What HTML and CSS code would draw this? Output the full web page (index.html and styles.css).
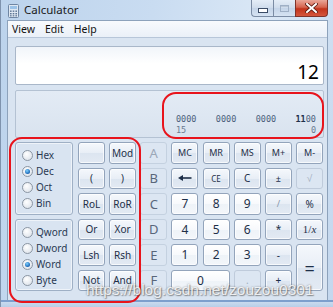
FILE: index.html
```html
<!DOCTYPE html>
<html>
<head>
<meta charset="utf-8">
<link rel="stylesheet" href="styles.css">
</head>
<body>
<div class="window">
  <div class="titlebar">
    <svg class="appicon" width="11" height="14" viewBox="0 0 11 14">
      <rect x="0.5" y="0.5" width="10" height="13" rx="1" fill="#dfe8f2" stroke="#6f86a3"/>
      <rect x="2" y="2" width="7" height="3" fill="#9cc3e8"/>
      <g fill="#5d7594">
        <rect x="2" y="6.5" width="1.6" height="1.4"/><rect x="4.7" y="6.5" width="1.6" height="1.4"/><rect x="7.4" y="6.5" width="1.6" height="1.4"/>
        <rect x="2" y="9" width="1.6" height="1.4"/><rect x="4.7" y="9" width="1.6" height="1.4"/><rect x="7.4" y="9" width="1.6" height="1.4"/>
        <rect x="2" y="11.2" width="1.6" height="1.2"/><rect x="4.7" y="11.2" width="1.6" height="1.2"/><rect x="7.4" y="11.2" width="1.6" height="1.2"/>
      </g>
    </svg>
    <span class="title">Calculator</span>
    <div class="controls">
      <div class="cbtn min"><span class="minbar"></span></div>
      <div class="cbtn max"><span class="maxbox"></span></div>
      <div class="cbtn close">
        <svg width="13" height="10" viewBox="0 0 13 10">
          <path d="M2 1 L11 9 M11 1 L2 9" stroke="#5a1a10" stroke-width="3.6" stroke-linecap="square"/>
          <path d="M2 1 L11 9 M11 1 L2 9" stroke="#ffffff" stroke-width="2" stroke-linecap="square"/>
        </svg>
      </div>
    </div>
  </div>
  <div class="client">
    <div class="menubar">
      <span class="menu">View</span>
      <span class="menu">Edit</span>
      <span class="menu">Help</span>
    </div>
    <div class="content">
      <div class="display">12</div>
      <div class="bits">
        <div class="bitsinner">
          <div class="bitrow">
            <span>0000</span><span>0000</span><span>0000</span><span><b>11</b>00</span>
          </div>
          <div class="bitrow small">
            <span>15</span><span>0</span>
          </div>
        </div>
      </div>
      <div class="keypad">
        <div class="radios">
          <div class="group">
            <div class="radio"><span class="dot"></span>Hex</div>
            <div class="radio"><span class="dot on"></span>Dec</div>
            <div class="radio"><span class="dot"></span>Oct</div>
            <div class="radio"><span class="dot"></span>Bin</div>
          </div>
          <div class="group">
            <div class="radio"><span class="dot"></span>Qword</div>
            <div class="radio"><span class="dot"></span>Dword</div>
            <div class="radio"><span class="dot on"></span>Word</div>
            <div class="radio"><span class="dot"></span>Byte</div>
          </div>
        </div>
        <div class="keys">
          <div class="btn"></div>
          <div class="btn">Mod</div>
          <div class="btn hex light">A</div>
          <div class="btn sm">MC</div>
          <div class="btn sm">MR</div>
          <div class="btn sm">MS</div>
          <div class="btn sm">M+</div>
          <div class="btn sm">M-</div>

          <div class="btn">(</div>
          <div class="btn">)</div>
          <div class="btn hex">B</div>
          <div class="btn"><svg width="14" height="6" viewBox="0 0 14 6"><path d="M4 3 H13.5" stroke="#1e2f48" stroke-width="1.6"/><path d="M0 3 L5 0 V6 Z" fill="#1e2f48"/></svg></div>
          <div class="btn xs">CE</div>
          <div class="btn">C</div>
          <div class="btn sm">±</div>
          <div class="btn dis">√</div>

          <div class="btn">RoL</div>
          <div class="btn">RoR</div>
          <div class="btn hex">C</div>
          <div class="btn num">7</div>
          <div class="btn num">8</div>
          <div class="btn num">9</div>
          <div class="btn thin">/</div>
          <div class="btn">%</div>

          <div class="btn">Or</div>
          <div class="btn">Xor</div>
          <div class="btn hex">D</div>
          <div class="btn num">4</div>
          <div class="btn num">5</div>
          <div class="btn num">6</div>
          <div class="btn">*</div>
          <div class="btn inv">1/<i>x</i></div>

          <div class="btn">Lsh</div>
          <div class="btn">Rsh</div>
          <div class="btn hex">E</div>
          <div class="btn num">1</div>
          <div class="btn num">2</div>
          <div class="btn num">3</div>
          <div class="btn">-</div>
          <div class="btn eq">=</div>

          <div class="btn">Not</div>
          <div class="btn">And</div>
          <div class="btn hex">F</div>
          <div class="btn num zero">0</div>
          <div class="btn dis">.</div>
          <div class="btn">+</div>
        </div>
      </div>
    </div>
  </div>
  <div class="bottomframe"></div>
</div>
<div class="mark mark-left"></div>
<div class="mark mark-right"></div>
<div class="watermark">https://blog.csdn.net/zouzou0301</div>
</body>
</html>
```
FILE: styles.css
```css
html, body {
  margin: 0;
  padding: 0;
}
body {
  width: 333px;
  height: 307px;
  overflow: hidden;
  position: relative;
  font-family: "Noto Sans", "Open Sans", sans-serif;
  background: linear-gradient(100deg, #bcd3ec 0%, #c9dcf1 40%, #dbe8f6 70%, #c3d7ee 100%);
}
.window {
  display: flex;
  flex-direction: column;
  height: 307px;
  border-left: 1px solid #7f93ad;
  box-sizing: border-box;
}
.titlebar {
  height: 20px;
  display: flex;
  align-items: flex-start;
  padding-left: 7px;
}
.appicon {
  margin-top: 4px;
}
.title {
  margin-left: 5px;
  margin-top: 3px;
  font-size: 11.5px;
  color: #1a1a1a;
  font-family: "Noto Sans", sans-serif;
  line-height: 14px;
}
.controls {
  margin-left: auto;
  margin-right: 5px;
  display: flex;
  height: 17px;
}
.cbtn {
  height: 16px;
  border: 1px solid #7b8ca4;
  border-top: none;
  display: flex;
  align-items: center;
  justify-content: center;
}
.min, .max {
  width: 21px;
  background: linear-gradient(#e4edf7, #cfdcec 50%, #c4d4e8 51%, #d6e3f2);
}
.min {
  border-radius: 0 0 0 4px;
  border-right: none;
}
.max {
  border-right: none;
}
.minbar {
  width: 8px;
  height: 3px;
  margin-top: 5px;
  background: #fff;
  border: 1px solid #3b4c66;
}
.maxbox {
  width: 7px;
  height: 5px;
  border: 1px solid #9fb0c6;
  box-shadow: inset 0 1px 0 #b9c6d6;
}
.close {
  width: 31px;
  border-radius: 0 0 4px 0;
  background: linear-gradient(#e9a799, #d6644f 45%, #c2331b 55%, #d4563c);
  border-color: #80332a;
}
.client {
  flex: 1;
  margin-left: 6px;
  margin-right: 5px;
  background: #d9e4f1;
  border: 1px solid #8da2bb;
  border-bottom: none;
  display: flex;
  flex-direction: column;
}
.menubar {
  height: 16px;
  display: flex;
  align-items: center;
  gap: 0;
  padding-left: 4px;
  background: linear-gradient(#f8fafd, #eaf0f8);
  border-bottom: 1px solid #b7c6d9;
}
.menu {
  font-size: 10.5px;
  color: #111;
  margin-right: 10px;
  line-height: 14px;
}
.content {
  padding: 8px 3px 0 7px;
}
.display {
  height: 39px;
  box-sizing: border-box;
  border: 1px solid #a9b7c9;
  border-radius: 2px;
  background: linear-gradient(#f1f5fa, #ffffff 45%, #ffffff);
  text-align: right;
  font-size: 19px;
  line-height: 20px;
  padding: 15px 4px 0 0;
  color: #000;
}
.bits {
  margin-top: 5px;
  height: 48px;
  box-sizing: border-box;
  border: 1px solid #b4c2d3;
  border-radius: 2px;
  background: linear-gradient(#e3ebf5, #d9e3ef);
  display: flex;
  justify-content: flex-end;
  padding: 23px 7px 0 0;
}
.bitsinner {
  width: 140px;
  font-family: "DejaVu Sans Mono", monospace;
  font-size: 8.5px;
  color: #4b5f7c;
}
.bitrow {
  display: flex;
  justify-content: space-between;
  line-height: 10px;
}
.bitrow b {
  color: #1f2f4a;
}
.bitrow.small {
  color: #6a7b92;
  margin-top: 1px;
}
.keypad {
  display: flex;
  margin-top: 4px;
}
.radios {
  width: 58px;
  margin-right: 5px;
  display: flex;
  flex-direction: column;
  gap: 4px;
}
.group {
  box-sizing: border-box;
  height: 73px;
  border: 1px solid #9fb0c5;
  border-radius: 3px;
  box-shadow: inset 0 0 0 1px #eef3f9;
  padding: 4px 0 0 6px;
}
.group + .group {
  height: 72px;
}
.radio {
  height: 16px;
  display: flex;
  align-items: center;
  font-size: 10px;
  color: #2a3a53;
}
.dot {
  width: 9px;
  height: 9px;
  border-radius: 50%;
  border: 1px solid #8b96a3;
  background: radial-gradient(circle at 40% 35%, #ffffff, #d6dde6);
  margin-right: 3px;
  display: flex;
  align-items: center;
  justify-content: center;
}
.dot.on::after {
  content: "";
  width: 5px;
  height: 5px;
  border-radius: 50%;
  background: radial-gradient(circle at 40% 35%, #7fd1ff, #1865b5 70%, #0d3c78);
}
.keys {
  width: 245px;
  height: 149px;
  display: grid;
  grid-template-columns: repeat(8, 1fr);
  grid-template-rows: repeat(6, 1fr);
  column-gap: 4.3px;
  row-gap: 4px;
}
.btn {
  box-sizing: border-box;
  border: 1px solid #93a4bb;
  border-radius: 3px;
  background: linear-gradient(#f5f8fc, #e8eef6 50%, #dce5f0 51%, #e3eaf3);
  box-shadow: inset 0 0 0 1px rgba(255,255,255,0.7);
  display: flex;
  align-items: center;
  justify-content: center;
  font-size: 10px;
  color: #1e2f48;
  font-family: "Noto Sans", sans-serif;
}
.btn.sm {
  font-size: 9px;
}
.btn.xs {
  font-size: 8px;
}
.btn.num {
  background: linear-gradient(#ffffff, #f7f9fc 50%, #eef3f8 51%, #f3f6fa);
  font-size: 12px;
}
.btn.hex {
  background: #dce6f2;
  border-color: #c4d1e0;
  box-shadow: none;
  font-size: 13px;
  color: #59667a;
}
.btn.hex.light {
  color: #9ba7b7;
}
.btn.dis {
  background: #dce6f2;
  border-color: #bfcbdb;
  box-shadow: none;
  color: #a3afbf;
}
.btn.thin {
  color: #8796aa;
  font-size: 9px;
}
.btn.inv {
  font-family: "Liberation Serif", serif;
  font-size: 11px;
}
.btn.eq {
  grid-row: span 2;
  font-size: 18px;
}
.btn.zero {
  grid-column: span 2;
}
.bottomframe {
  height: 5px;
  border-top: 2px solid #7d9fcd;
  background: linear-gradient(#c9dbef, #b8cee8);
}
.mark {
  position: absolute;
  border: 2px solid #e8141c;
  border-radius: 13px;
  box-sizing: border-box;
}
.mark-left {
  left: 9px;
  top: 137px;
  width: 132px;
  height: 166px;
}
.mark-right {
  left: 162px;
  top: 92px;
  width: 162px;
  height: 47px;
  border-radius: 14px;
}
.watermark {
  position: absolute;
  left: 86px;
  top: 281px;
  font-family: "Liberation Sans", Arial, sans-serif;
  font-size: 15.5px;
  color: rgba(255,255,255,0.85);
  text-shadow: 0 0 2px rgba(60,60,60,0.6), 1px 1px 1px rgba(80,80,80,0.5);
  white-space: nowrap;
}
```
